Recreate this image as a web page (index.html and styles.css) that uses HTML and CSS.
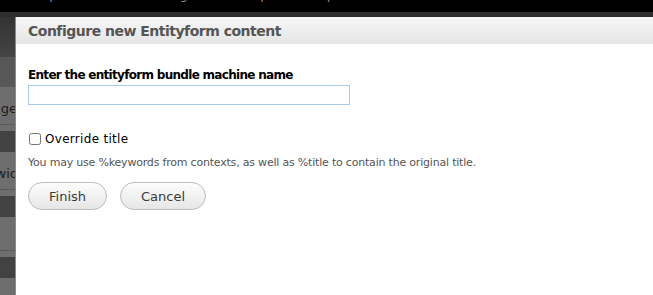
FILE: index.html
```html
<!DOCTYPE html>
<html lang="en">
<head>
    <meta charset="UTF-8">
    <title>Configure new Entityform content</title>
    <link rel="stylesheet" href="styles.css">
</head>
<body>
    <div class="toolbar">
        <ul class="toolbar-menu">
            <li>Content</li>
            <li>People</li>
            <li>Modules</li>
            <li>Configuration</li>
            <li>Reports</li>
            <li>Help</li>
        </ul>
    </div>
    <div class="toolbar-shade"></div>

    <div class="page">
        <div class="page-side">
            <div class="side-head"></div>
            <div class="side-tab"></div>
            <div class="side-row"><span>ge</span></div>
            <div class="side-block"></div>
            <div class="side-row"><span>wic</span></div>
            <div class="side-block"></div>
            <div class="side-row tall"></div>
            <div class="side-block"></div>
            <div class="side-rest"></div>
        </div>

        <div class="dialog">
            <div class="dialog-title">Configure new Entityform content</div>
            <form class="dialog-body">
                <div class="form-item">
                    <label class="form-label" for="bundle">Enter the entityform bundle machine name</label>
                    <input class="form-text" type="text" id="bundle">
                </div>
                <div class="form-item checkbox">
                    <input type="checkbox" id="override">
                    <label for="override">Override title</label>
                </div>
                <div class="description">You may use %keywords from contexts, as well as %title to contain the original title.</div>
                <div class="form-actions">
                    <button type="button" class="form-submit">Finish</button>
                    <button type="button" class="form-submit">Cancel</button>
                </div>
            </form>
        </div>
    </div>
</body>
</html>
```

FILE: styles.css
```css
* {
    margin: 0;
    padding: 0;
    box-sizing: border-box;
}

body {
    font-family: "DejaVu Sans", Verdana, sans-serif;
    background: #000;
    height: 295px;
    overflow: hidden;
}

.toolbar {
    height: 12px;
    background: #000;
    overflow: hidden;
}

.toolbar-menu {
    list-style: none;
    display: flex;
    gap: 20px;
    margin: -10px 0 0 -34px;
    font-size: 11px;
    line-height: 14px;
    color: #9a9a9a;
}

.toolbar-shade {
    height: 5px;
    background: #2e2e2e;
}

.page {
    display: flex;
    height: 278px;
}

.page-side {
    width: 16px;
    background: #6e6e6e;
    display: flex;
    flex-direction: column;
    border-right: 1px solid #8a8a8a;
    overflow: hidden;
}

.side-head {
    height: 41px;
    background: linear-gradient(#333, #444);
    border-bottom: 1px solid #5a5a5a;
}

.side-tab {
    height: 29px;
    background: #575757;
}

.side-row {
    height: 38px;
    border-bottom: 1px solid #5a5a5a;
    display: flex;
    align-items: center;
    justify-content: flex-end;
    font-size: 13px;
    color: #1a1a1a;
}

.side-row span {
    margin-right: -2px;
    padding-top: 6px;
}

.side-row.tall {
    height: 34px;
}

.side-block {
    height: 21px;
    margin-top: 6px;
    background: #424242;
}

.side-rest {
    flex: 1;
}

.dialog {
    flex: 1;
    background: #fff;
}

.dialog-title {
    height: 27px;
    padding: 5px 12px 4px;
    background: linear-gradient(#f7f7f7, #e5e5e5);
    font-size: 14px;
    font-weight: bold;
    letter-spacing: -0.5px;
    color: #555;
    line-height: 19px;
}

.dialog-body {
    padding: 24px 12px 22px;
}

.form-item {
    margin-bottom: 27px;
}

.form-label {
    display: block;
    font-size: 12px;
    font-weight: bold;
    letter-spacing: -0.7px;
    color: #000;
    margin-bottom: 3px;
}

.form-text {
    display: block;
    width: 322px;
    height: 20px;
    border: 1px solid #a9caf0;
    outline: none;
}

.form-item.checkbox {
    display: flex;
    align-items: center;
    gap: 4px;
    font-size: 12px;
    letter-spacing: 0.3px;
    color: #000;
    margin-bottom: 10px;
}

.form-item.checkbox input {
    width: 12px;
    height: 12px;
    margin-left: 1px;
}

.description {
    font-size: 11px;
    letter-spacing: -0.2px;
    color: #555;
    margin-bottom: 13px;
}

.form-actions {
    display: flex;
    gap: 13px;
}

.form-submit {
    font-family: inherit;
    font-size: 13px;
    color: #3a3a3a;
    height: 28px;
    padding: 0 20px;
    border: 1px solid #bcbcbc;
    border-radius: 14px;
    background: linear-gradient(#fdfdfd, #e6e6e6);
}
```
